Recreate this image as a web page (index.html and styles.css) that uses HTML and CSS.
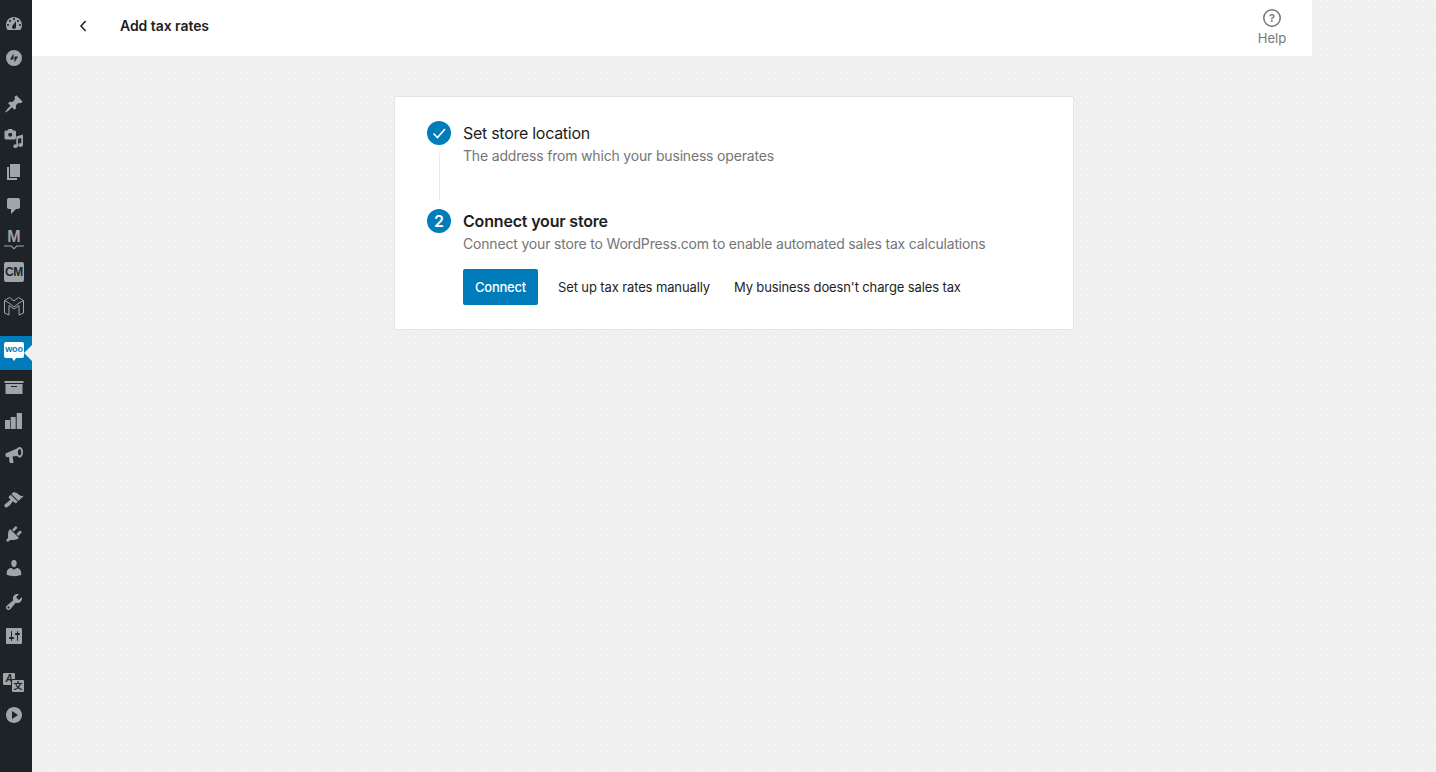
FILE: index.html
```html
<!DOCTYPE html>
<html lang="en">
<head>
<meta charset="utf-8">
<title>Add tax rates</title>
<link rel="stylesheet" href="styles.css">
</head>
<body>
<nav class="sidebar">
  <a class="item first"><svg viewBox="0 0 20 20"><path fill-rule="evenodd" d="M3.76 16h12.48c1.1-1.37 1.76-3.11 1.76-5 0-4.42-3.58-8-8-8s-8 3.58-8 8c0 1.89.66 3.63 1.76 5zM10 4c.55 0 1 .45 1 1s-.45 1-1 1-1-.45-1-1 .45-1 1-1zM6 6c.55 0 1 .45 1 1s-.45 1-1 1-1-.45-1-1 .45-1 1-1zm8 0c.55 0 1 .45 1 1s-.45 1-1 1-1-.45-1-1 .45-1 1-1zm-5.37 5.55L12 7v6c0 1.1-.9 2-2 2s-2-.9-2-2c0-.57.24-1.08.63-1.45zM4 10c.55 0 1 .45 1 1s-.45 1-1 1-1-.45-1-1 .45-1 1-1zm12 0c.55 0 1 .45 1 1s-.45 1-1 1-1-.45-1-1 .45-1 1-1z"/></svg></a>
  <a class="item"><svg viewBox="0 0 20 20"><path fill-rule="evenodd" d="M10 2a8 8 0 1 1 0 16 8 8 0 0 1 0-16zM9.500 5.500 6 11.500h3.500zM10.500 14.500l3.500-6h-3.500z"/></svg></a>
  <a class="item sep"><svg viewBox="0 0 20 20"><path d="M10.44 3.02l1.82-1.82 6.36 6.35-1.83 1.82c-1.05-.68-2.48-.57-3.41.36l-.75.75c-.92.93-1.04 2.35-.35 3.41l-1.83 1.82-2.41-2.41-2.8 2.79c-.42.42-3.38 2.71-3.8 2.29s1.86-3.39 2.28-3.81l2.79-2.79L4.1 9.36l1.83-1.82c1.05.69 2.48.57 3.4-.36l.75-.75c.93-.92 1.05-2.35.36-3.41z"/></svg></a>
  <a class="item"><svg viewBox="0 0 20 20"><path fill-rule="evenodd" d="M4.500 1h3.500l1 1.500h1.500c.8 0 1.500.7 1.500 1.500v6c0 .8-.7 1.500-1.500 1.500H2c-.8 0-1.500-.7-1.500-1.500V4c0-.8.7-1.500 1.500-1.500h1.500zM6.200 4.800a2 2 0 1 0 0 4 2 2 0 0 0 0-4zM19 6.500v10.200c0 1.300-1.100 2.300-2.500 2.300s-2.300-.8-2.300-1.900 1.200-2 2.500-2c.2 0 .4 0 .6.1V10l-3.300.8V18c0 1.100-1.100 2-2.500 2s-2.300-.7-2.300-1.800 1.200-2 2.500-2c.2 0 .4 0 .6.1V8.500z"/></svg></a>
  <a class="item"><svg viewBox="0 0 20 20"><path d="M6 15V2h10v13H6zm-1 1h8v2H3V5h2v11z"/></svg></a>
  <a class="item"><svg viewBox="0 0 20 20"><path d="M5 2h9c1.100 0 2 .9 2 2v7c0 1.100-.9 2-2 2h-2l-5 5v-5H5c-1.100 0-2-.9-2-2V4c0-1.100.9-2 2-2z"/></svg></a>
  <a class="item book"><span class="book-m">M</span><svg viewBox="0 0 20 6"><path d="M0 1.500h7.500L10 4l2.500-2.500H20v1h-7L10 5.500 7 2.500H0z"/></svg></a>
  <a class="item short"><span class="cm">CM</span></a>
  <a class="item"><svg class="outline" viewBox="0 0 20 20"><path d="M.5 4.500 5.500 1.500 10 5l4.500-3.500 5 3V17l-4.500 2V9.500L10 13 5 9.500V19L.5 17zM.5 4.500 5 7l5 4 5-4 4.500-2.500"/></svg></a>
  <a class="item active"><span class="woo">woo</span></a>
  <a class="item"><svg viewBox="0 0 20 20"><path fill-rule="evenodd" d="M19.500 4v2H.5V4h19zM1.500 7h17v10h-17V7zM13 10V9H7v1h6z"/></svg></a>
  <a class="item"><svg viewBox="0 0 20 20"><path d="M18 2v16h-5.300V2H18zm-6.300 4v12H6.700V6h5zM6 9v9H1V9h5z"/></svg></a>
  <a class="item"><svg viewBox="0 0 20 20"><path fill-rule="evenodd" d="M1.500 8.500 13 3.500c.8-.8 1.800-1.500 2.800-1.500 2 0 3.200 2.200 3.200 5s-1.200 5.500-3.200 5.500c-1 0-2-.7-2.800-1.500l-4.500.5L9.500 17c.1.600-.2 1-.7 1H6.500c-.5 0-.8-.3-.9-.8L5 12 3 12c-.8 0-1.500-.7-1.500-1.500zM15.600 4c-1 0-1.700 1.500-1.700 3.200s.7 3.300 1.700 3.300 1.700-1.500 1.700-3.300S16.600 4 15.600 4z"/></svg></a>
  <a class="item sep tools-gap"><svg viewBox="0 0 20 20"><path d="M14.480 11.060L7.410 3.990l1.500-1.500c.5-.56 2.300-.47 3.510.32 1.210.8 1.430 1.280 2.910 2.100 1.180.64 2.450 1.260 4.450.85zm-.71.71L6.700 4.700 4.930 6.470c-.39.39-.39 1.020 0 1.410l1.060 1.060c.39.39.39 1.030 0 1.420-.6.6-1.430 1.110-2.210 1.690-.35.26-.7.53-1.010.84C1.430 13.230.4 14.540.4 15.870c0 .4.160.8.470 1.100.3.3.71.470 1.110.470 1.330 0 2.640-1.030 3.980-2.360.31-.31.580-.66.840-1.010.58-.78 1.090-1.610 1.690-2.210.39-.39 1.030-.39 1.420 0l1.060 1.060c.39.39 1.020.39 1.410 0z"/></svg></a>
  <a class="item"><svg viewBox="0 0 20 20"><path d="M13.110 4.360L9.870 7.600 8 5.730l3.240-3.240c.35-.34 1.050-.2 1.560.32.520.51.660 1.210.31 1.550zm-8 1.770l.91-1.120 9.010 9.010-1.190.84c-.71.71-2.630 1.160-3.820 1.160H6.140L4.900 17.260c-.59.59-1.540.59-2.120 0-.59-.58-.59-1.530 0-2.120l1.240-1.240v-3.880c0-1.130.4-3.190 1.090-3.890zm7.260 3.970l3.240-3.240c.34-.35 1.040-.21 1.550.31.520.51.660 1.210.31 1.550l-3.240 3.250z"/></svg></a>
  <a class="item"><svg viewBox="0 0 20 20"><path d="M10 9.250c-2.270 0-2.730-3.440-2.730-3.440C7 4.020 7.820 2 9.970 2c2.160 0 2.980 2.020 2.710 3.810 0 0-.41 3.440-2.680 3.440zm0 2.570L12.720 10c2.390 0 4.520 2.330 4.520 4.530v2.490s-3.650 1.130-7.240 1.130c-3.650 0-7.240-1.130-7.240-1.130v-2.490c0-2.250 1.940-4.480 4.470-4.480z"/></svg></a>
  <a class="item"><svg viewBox="0 0 20 20"><path fill-rule="evenodd" d="M16.680 9.770c-1.340 1.340-3.300 1.670-4.950.99l-5.410 6.520c-.99.99-2.590.99-3.580 0s-.99-2.590 0-3.570l6.520-5.420c-.68-1.650-.35-3.610.99-4.950 1.280-1.280 3.120-1.620 4.720-1.060l-2.890 2.890 2.820 2.820 2.860-2.870c.53 1.580.18 3.390-1.080 4.650zM3.810 16.210c.4.39 1.040.39 1.430 0 .4-.4.4-1.040 0-1.430-.39-.4-1.030-.4-1.430 0-.39.39-.39 1.030 0 1.430z"/></svg></a>
  <a class="item"><svg viewBox="0 0 20 20"><path fill-rule="evenodd" d="M18 17V3c0-.6-.4-1-1-1H3c-.6 0-1 .4-1 1v14c0 .6.4 1 1 1h14c.6 0 1-.4 1-1zM8 11h1c.55 0 1 .45 1 1s-.45 1-1 1H8v1.500c0 .28-.22.5-.5.5s-.5-.22-.5-.5V13H6c-.55 0-1-.45-1-1s.45-1 1-1h1V5.500c0-.28.22-.5.5-.5s.5.22.5.5V11zm5-2h-1c-.55 0-1-.45-1-1s.45-1 1-1h1V5.500c0-.28.22-.5.5-.5s.5.22.5.5V7h1c.55 0 1 .45 1 1s-.45 1-1 1h-1v5.500c0 .28-.22.5-.5.5s-.5-.22-.5-.5V9z"/></svg></a>
  <a class="item sep"><span class="translate"><span class="tr-a">A</span><span class="tr-b">文</span></span></a>
  <a class="item last"><svg viewBox="0 0 20 20"><path fill-rule="evenodd" d="M10 2c4.420 0 8 3.580 8 8s-3.580 8-8 8-8-3.580-8-8 3.580-8 8-8zm-2 12l6-4-6-4v8z"/></svg></a>
</nav>
<div class="main">
  <header class="topbar">
    <div class="topbar-left">
      <a class="back"><svg viewBox="0 0 24 24"><path d="M14.600 7 10 12l4.600 5"/></svg></a>
      <h1 class="title">Add tax rates</h1>
    </div>
    <a class="help">
      <svg viewBox="0 0 24 24"><circle cx="12" cy="12" r="8.250"/><text x="12" y="16" class="help-q">?</text></svg>
      <span>Help</span>
    </a>
  </header>
  <section class="card">
    <div class="step">
      <div class="marker">
        <span class="badge"><svg viewBox="0 0 24 24"><path d="M6.500 12.500 10.500 16.500 18 8"/></svg></span>
        <span class="line"></span>
      </div>
      <div class="step-body done">
        <h2 class="step-title">Set store location</h2>
        <p class="step-desc">The address from which your business operates</p>
      </div>
    </div>
    <div class="step">
      <div class="marker"><span class="badge">2</span></div>
      <div class="step-body">
        <h2 class="step-title current">Connect your store</h2>
        <p class="step-desc">Connect your store to WordPress.com to enable automated sales tax calculations</p>
        <div class="actions">
          <button class="btn primary">Connect</button>
          <button class="btn">Set up tax rates manually</button>
          <button class="btn">My business doesn't charge sales tax</button>
        </div>
      </div>
    </div>
  </section>
</div>
</body>
</html>
```
FILE: styles.css
```css
* { box-sizing: border-box; }
html, body { height: 100%; }
body {
  margin: 0;
  display: flex;
  overflow: hidden;
  font-family: Inter, "Noto Sans", sans-serif;
  color: #1e1e1e;
  background-color: #f0f0f0;
  background-image: radial-gradient(circle at 1px 1px, #f6f6f6 0.6px, transparent 1px);
  background-size: 6px 6px;
}
.sidebar {
  width: 32px;
  flex: none;
  height: 100%;
  background: #1d2327;
  display: flex;
  flex-direction: column;
  padding-top: 7px;
}
.item {
  height: 34px;
  flex: none;
  display: flex;
  flex-direction: column;
  align-items: center;
  justify-content: center;
  position: relative;
  padding-right: 4px;
}
.item svg { width: 20px; height: 20px; fill: #a0a5aa; display: block; }
.sep { margin-top: 12px; }
.tools-gap { margin-top: 11px; }
.short { height: 32px; justify-content: flex-start; padding-top: 5px; }
.item.last { margin-top: -1px; }
.book svg { height: 6px; width: 20px; margin-top: 1px; }
.book-m { font: 700 16px/13px "Liberation Sans", sans-serif; color: #a0a5aa; }
.cm {
  width: 20px; height: 20px;
  background: #a0a5aa;
  border-radius: 2px;
  color: #1d2327;
  font: 700 12px/20px "Liberation Sans", sans-serif;
  text-align: center;
  letter-spacing: -.3px;
}
.outline { fill: none !important; stroke: #a0a5aa; stroke-width: 1; }
.active {
  background: #007cba;
  margin-top: 13px;
}
.active::after {
  content: "";
  position: absolute;
  right: 0;
  top: 9px;
  border: 8px solid transparent;
  border-right-color: #f0f0f0;
  border-left-width: 0;
}
.woo {
  width: 20px; height: 16px;
  background: #fff;
  border-radius: 2px;
  color: #007cba;
  font: 700 9px/15px "Liberation Sans", sans-serif;
  text-align: center;
  position: relative;
  top: -3px;
  letter-spacing: -.2px;
}
.woo::after {
  content: "";
  position: absolute;
  left: 8px;
  bottom: -3px;
  border: 2px solid transparent;
  border-top: 3px solid #fff;
  border-bottom: 0;
}
.translate { position: relative; width: 20px; height: 19px; display: block; }
.tr-a, .tr-b {
  position: absolute;
  width: 12px; height: 12px;
  background: #a0a5aa;
  color: #1d2327;
  border-radius: 1px;
  text-align: center;
}
.tr-a { left: -1px; top: 0; font: italic 700 10px/12px "Liberation Sans", sans-serif; }
.tr-b { right: 0; bottom: 0; font: 700 9px/12px "Noto Sans CJK SC", sans-serif; box-shadow: 0 0 0 1px #1d2327; }

.main { flex: 1; min-width: 0; display: flex; flex-direction: column; align-items: center; }
.topbar {
  align-self: flex-start;
  width: 1280px;
  height: 56px;
  background: #fff;
  display: flex;
  justify-content: space-between;
  padding-left: 40px;
  padding-right: 14px;
}
.topbar-left { display: flex; align-items: center; height: 52px; }
.back { width: 24px; height: 24px; margin-left: -1px; }
.back svg { width: 24px; height: 24px; fill: none; stroke: #1e1e1e; stroke-width: 1.500; display: block; }
.title { margin: 0 0 0 25px; font-size: 14px; line-height: 20px; font-weight: 600; letter-spacing: -.06px; }
.help {
  width: 52px;
  display: flex;
  flex-direction: column;
  align-items: center;
  padding-top: 6px;
  color: #757575;
  font-size: 13px;
  line-height: 16px;
}
.help svg { width: 24px; height: 24px; display: block; }
.help circle { fill: none; stroke: #757575; stroke-width: 1.500; }
.help-q { fill: #757575; font: 600 11px Inter, sans-serif; text-anchor: middle; }

.card {
  width: 680px;
  height: 234px;
  margin-top: 40px;
  background: #fff;
  border: 1px solid #e2e4e7;
  border-radius: 2px;
  padding: 24px 32px;
}
.step { display: flex; gap: 12px; }
.marker { width: 24px; flex: none; display: flex; flex-direction: column; align-items: center; }
.badge {
  width: 24px; height: 24px;
  border-radius: 50%;
  background: #007cba;
  color: #fff;
  font-size: 16px;
  font-weight: 600;
  line-height: 24px;
  text-align: center;
  display: block;
}
.badge svg { width: 24px; height: 24px; display: block; fill: none; stroke: #fff; stroke-width: 1.600; }
.line { width: 1px; height: 48px; margin-top: 8px; background: #e9e9e9; }
.step-body.done { height: 88px; }
.step-title { margin: 0; font-size: 16px; line-height: 24px; font-weight: 400; letter-spacing: -.28px; }
.step-title.current { font-weight: 600; letter-spacing: -.18px; }
.step-desc { margin: 0; padding-top: 1px; font-size: 14px; line-height: 20px; color: #757575; letter-spacing: -.18px; }
.actions { display: flex; align-items: center; margin-top: 15px; }
.btn {
  font: 400 13px/20px Inter, sans-serif;
  letter-spacing: -.12px;
  color: #1e1e1e;
  background: none;
  border: 0;
  height: 36px;
  padding: 0 12px;
}
.primary + .btn { margin-left: 8px; }
.btn.primary { width: 75px; padding: 0; background: #007cba; color: #fff; border-radius: 2px; font-weight: 500; letter-spacing: -.25px; }
```
